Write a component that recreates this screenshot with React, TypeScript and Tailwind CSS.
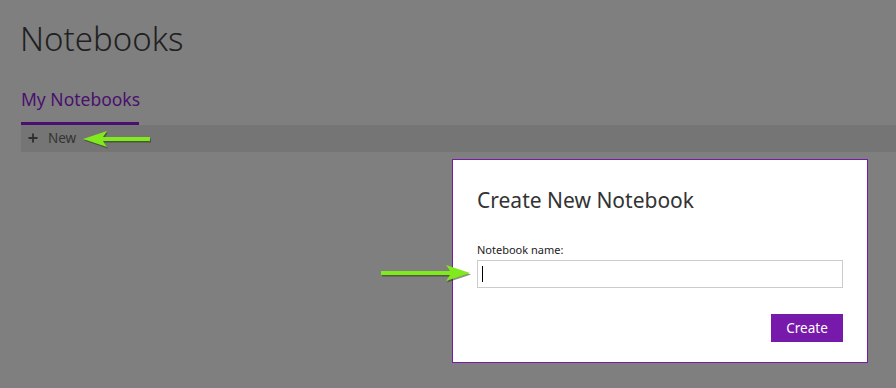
import React from "react";

function Arrow({ dir, width }: { dir: "left" | "right"; width: number }) {
  const h = 18;
  const mid = 9;
  const head = 24;
  const pts =
    dir === "left"
      ? `0,${mid} ${head},${mid - 8} ${head - 4},${mid - 2} ${width},${mid - 2} ${width},${mid + 2} ${head - 4},${mid + 2} ${head},${mid + 8}`
      : `${width},${mid} ${width - head},${mid - 8} ${width - head + 4},${mid - 2} 0,${mid - 2} 0,${mid + 2} ${width - head + 4},${mid + 2} ${width - head},${mid + 8}`;
  return (
    <svg width={width + 2} height={h + 2} viewBox={`0 0 ${width + 2} ${h + 2}`}>
      <polygon points={pts} fill="#2a3a10" opacity="0.55" transform="translate(1,1.5)" />
      <polygon points={pts} fill="#80ea1c" />
    </svg>
  );
}

export default function App() {
  return (
    <div
      className="relative w-[896px] h-[388px] overflow-hidden bg-[#7f7f7f]"
      style={{ fontFamily: '"Noto Sans", "Open Sans", sans-serif' }}
    >
      <div className="pt-[17px] pl-[20px]">
        <h1 className="text-[33px] leading-[44px] font-light text-[#1f1f1f]">Notebooks</h1>
      </div>
      <div className="pl-[21px] mt-[25px]">
        <div className="inline-flex flex-col">
          <span className="text-[17.5px] leading-[26px] text-[#4a106e]">My Notebooks</span>
          <div className="h-[3px] w-[118px] bg-[#4b0f72] mt-[10px]" />
        </div>
      </div>
      <div className="ml-[21px] h-[27px] bg-[#757575] flex items-center pl-[7px] gap-[10px] text-[#333333]">
        <svg width="10" height="10" viewBox="0 0 10 10" className="-mt-[1px]">
          <path d="M5 0.5V9.5M0.5 5H9.5" stroke="#2e2e2e" strokeWidth="1.8" />
        </svg>
        <span className="text-[13.5px] leading-none">New</span>
      </div>

      <div className="absolute left-[452px] top-[159px] w-[416px] h-[204px] bg-white border border-[#7719aa] px-[24px] pt-[26px]">
        <div className="text-[21px] leading-[28px] text-[#333333]">Create New Notebook</div>
        <div className="mt-[28px] text-[11px] leading-[16px] text-[#222222]">Notebook name:</div>
        <div className="mt-[2px] h-[28px] w-[366px] border border-[#cccccc] flex items-center pl-[4px]">
          <div className="w-[1px] h-[16px] bg-black" />
        </div>
        <div className="mt-[26px] flex justify-end w-[366px]">
          <div className="w-[72px] h-[28px] bg-[#7719aa] text-white text-[13.5px] flex items-center justify-center">
            Create
          </div>
        </div>
      </div>

      <div className="absolute left-[83px] top-[130px]">
        <Arrow dir="left" width={67} />
      </div>
      <div className="absolute left-[381px] top-[264px]">
        <Arrow dir="right" width={89} />
      </div>
    </div>
  );
}
